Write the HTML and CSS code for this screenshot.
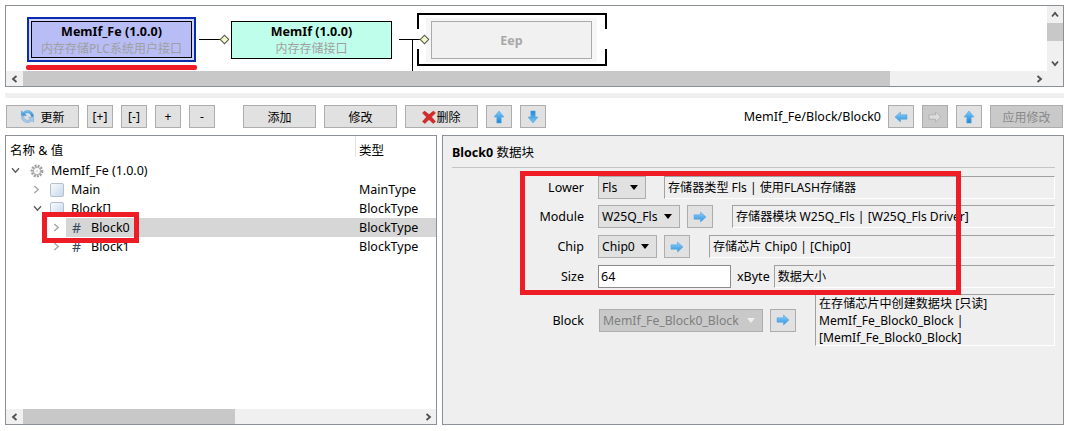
FILE: index.html
```html
<!DOCTYPE html>
<html lang="zh">
<head>
<meta charset="utf-8">
<title>MemIf_Fe</title>
<link rel="stylesheet" href="styles.css">
</head>
<body>
<svg class="defs" width="0" height="0" aria-hidden="true">
  <defs>
    <linearGradient id="blueUp" x1="0" y1="0" x2="0" y2="1"><stop offset="0" stop-color="#7cc8f5"/><stop offset="1" stop-color="#1c86d8"/></linearGradient>
    <linearGradient id="blueDown" x1="0" y1="0" x2="0" y2="1"><stop offset="0" stop-color="#1c86d8"/><stop offset="1" stop-color="#7cc8f5"/></linearGradient>
    <linearGradient id="blueSide" x1="0" y1="0" x2="0" y2="1"><stop offset="0" stop-color="#8ed0f8"/><stop offset="1" stop-color="#2f93e0"/></linearGradient>
    <linearGradient id="sheet" x1="0" y1="0" x2="1" y2="1"><stop offset="0" stop-color="#fafcff"/><stop offset="1" stop-color="#c6d6ea"/></linearGradient>
    <symbol id="up" viewBox="0 0 14 14"><path d="M7 1 L12 7 H9.2 V13 H4.8 V7 H2 Z" fill="url(#blueUp)" stroke="#5aa7df" stroke-width=".6"/></symbol>
    <symbol id="down" viewBox="0 0 14 14"><path d="M7 13 L12 7 H9.2 V1 H4.8 V7 H2 Z" fill="url(#blueDown)" stroke="#5aa7df" stroke-width=".6"/></symbol>
    <symbol id="right" viewBox="0 0 14 14"><path d="M13 7 L7.5 2 V4.8 H1 V9.2 H7.5 V12 Z" fill="url(#blueSide)" stroke="#5aa7df" stroke-width=".6"/></symbol>
    <symbol id="left" viewBox="0 0 14 14"><path d="M1 7 L6.5 2 V4.8 H13 V9.2 H6.5 V12 Z" fill="url(#blueSide)" stroke="#5aa7df" stroke-width=".6"/></symbol>
    <symbol id="chev-r" viewBox="0 0 8 10"><path d="M1.5 1 L6 5 L1.5 9" fill="none" stroke="#a6a6a6" stroke-width="1.6"/></symbol>
    <symbol id="chev-d" viewBox="0 0 10 8"><path d="M1 1.5 L5 6 L9 1.5" fill="none" stroke="#5c5c5c" stroke-width="1.6"/></symbol>
    <symbol id="sb-l" viewBox="0 0 8 8"><path d="M5.5 1 L2 4 L5.5 7" fill="none" stroke="#505050" stroke-width="1.8"/></symbol>
    <symbol id="sb-r" viewBox="0 0 8 8"><path d="M2.5 1 L6 4 L2.5 7" fill="none" stroke="#505050" stroke-width="1.8"/></symbol>
    <symbol id="sb-u" viewBox="0 0 8 8"><path d="M1 5.5 L4 2 L7 5.5" fill="none" stroke="#505050" stroke-width="1.8"/></symbol>
    <symbol id="sb-d" viewBox="0 0 8 8"><path d="M1 2.5 L4 6 L7 2.5" fill="none" stroke="#505050" stroke-width="1.8"/></symbol>
    <symbol id="box" viewBox="0 0 14 14"><rect x=".5" y=".5" width="13" height="13" rx="1.5" fill="url(#sheet)" stroke="#b5c0cc"/></symbol>
    <symbol id="gear" viewBox="0 0 14 14"><circle cx="7" cy="7" r="5" fill="none" stroke="#a0a0a0" stroke-width="2.8" stroke-dasharray="1.9 1.05"/><circle cx="7" cy="7" r="3.6" fill="none" stroke="#b4b4b4" stroke-width="1.4"/><circle cx="7" cy="7" r="1.5" fill="#e3e3e3"/></symbol>
  </defs>
</svg>

<div class="app">
  <section class="diagram">
    <div class="canvas">
      <div class="node node-fe"><div class="node-inner"><b>MemIf_Fe (1.0.0)</b><span>内存存储PLC系统用户接口</span></div></div>
      <div class="mark-underline"></div>
      <div class="link link-a"></div>
      <div class="diamond diamond-a"></div>
      <div class="node node-memif"><b>MemIf (1.0.0)</b><span>内存存储接口</span></div>
      <div class="link link-b"></div>
      <div class="link-drop"></div>
      <div class="frame"><div class="frame-side frame-l"></div><div class="frame-side frame-r"></div></div>
      <div class="node-halo"></div>
      <div class="node node-eep"><b>Eep</b></div>
      <div class="diamond diamond-b"></div>
    </div>
    <div class="vscroll">
      <div class="sb-btn"><svg class="sb-ico"><use href="#sb-u"/></svg></div>
      <div class="vthumb"></div>
      <div class="sb-fill"></div>
      <div class="sb-btn"><svg class="sb-ico"><use href="#sb-d"/></svg></div>
    </div>
    <div class="hscroll">
      <div class="sb-btn"><svg class="sb-ico"><use href="#sb-l"/></svg></div>
      <div class="hthumb hthumb-top"></div>
      <div class="sb-fill"></div>
      <div class="sb-btn"><svg class="sb-ico"><use href="#sb-r"/></svg></div>
    </div>
    <div class="corner"></div>
  </section>

  <div class="divider"></div>

  <div class="toolbar">
    <button class="btn wide"><svg class="ico16" viewBox="0 0 16 16"><path d="M8 1.5 A6.5 6.5 0 0 1 14.5 8 H12 A4 4 0 0 0 5 5.4 L7 7 H1.5 V1.8 L3.3 3.6 A6.5 6.5 0 0 1 8 1.5 Z" fill="url(#blueUp)" stroke="#4d8fc9" stroke-width=".5"/><path d="M8 14.5 A6.5 6.5 0 0 1 1.5 8 H4 A4 4 0 0 0 11 10.6 L9 9 H14.5 V14.2 L12.7 12.4 A6.5 6.5 0 0 1 8 14.5 Z" fill="#a7c8e8" stroke="#6b9fcf" stroke-width=".5"/></svg>更新</button>
    <button class="btn small gap8">[+]</button>
    <button class="btn small gap8">[-]</button>
    <button class="btn small gap8">+</button>
    <button class="btn small gap8">-</button>
    <button class="btn wide gap28">添加</button>
    <button class="btn wide gap8">修改</button>
    <button class="btn wide gap8"><svg class="ico14" viewBox="0 0 14 14"><path d="M2.5 1 L7 4.6 L11.5 1 L13.5 3 L9.5 7 L13.5 11.5 L11.2 13.5 L7 9.6 L2.8 13.5 L.5 11.5 L4.5 7 L.5 3 Z" fill="#d42a2a" stroke="#b81c1c" stroke-width=".5"/></svg>删除</button>
    <button class="btn small gap8"><svg class="ico14"><use href="#up"/></svg></button>
    <button class="btn small gap8"><svg class="ico14"><use href="#down"/></svg></button>
    <span class="path">MemIf_Fe/Block/Block0</span>
    <button class="btn small gap7"><svg class="ico14"><use href="#left"/></svg></button>
    <button class="btn small gap8 off"><svg class="ico14 dim" viewBox="0 0 14 14"><path d="M13 7 L7.5 2 V4.8 H1 V9.2 H7.5 V12 Z" fill="#dcdcdc" stroke="#a8a8a8" stroke-width=".7"/></svg></button>
    <button class="btn small gap8"><svg class="ico14"><use href="#up"/></svg></button>
    <button class="btn wide gap8 off apply">应用修改</button>
  </div>

  <div class="workspace">
    <section class="tree">
      <div class="tree-head"><span class="head-name">名称 &amp; 值</span><span class="head-type">类型</span></div>
      <div class="row lvl0">
        <span class="twist"><svg class="chev-d"><use href="#chev-d"/></svg></span>
        <div class="row-body"><svg class="ico14"><use href="#gear"/></svg><span class="name">MemIf_Fe (1.0.0)</span><span class="type"></span></div>
      </div>
      <div class="row lvl1">
        <span class="twist"><svg class="chev-r"><use href="#chev-r"/></svg></span>
        <div class="row-body"><svg class="ico14"><use href="#box"/></svg><span class="name">Main</span><span class="type">MainType</span></div>
      </div>
      <div class="row lvl1">
        <span class="twist"><svg class="chev-d"><use href="#chev-d"/></svg></span>
        <div class="row-body"><svg class="ico14"><use href="#box"/></svg><span class="name">Block[]</span><span class="type">BlockType</span></div>
      </div>
      <div class="row lvl2">
        <span class="twist"><svg class="chev-r"><use href="#chev-r"/></svg></span>
        <div class="row-body selected"><span class="hash">#</span><span class="name">Block0</span><span class="type">BlockType</span></div>
      </div>
      <div class="row lvl2">
        <span class="twist"><svg class="chev-r"><use href="#chev-r"/></svg></span>
        <div class="row-body"><span class="hash">#</span><span class="name">Block1</span><span class="type">BlockType</span></div>
      </div>
      <div class="tree-space"></div>
      <div class="hscroll">
        <div class="sb-btn"><svg class="sb-ico"><use href="#sb-l"/></svg></div>
        <div class="hthumb hthumb-tree"></div>
        <div class="sb-fill"></div>
        <div class="sb-btn"><svg class="sb-ico"><use href="#sb-r"/></svg></div>
      </div>
      <div class="mark-tree"></div>
    </section>

    <section class="form">
      <h2 class="form-title"><b>Block0</b> 数据块</h2>
      <div class="field tall-29">
        <label class="lbl">Lower</label>
        <div class="combo c-lower">Fls<i class="caret"></i></div>
        <div class="desc d-lower">存储器类型 Fls | 使用FLASH存储器</div>
      </div>
      <div class="field">
        <label class="lbl">Module</label>
        <div class="combo c-module">W25Q_Fls<i class="caret"></i></div>
        <button class="btn small go"><svg class="ico14"><use href="#right"/></svg></button>
        <div class="desc d-link">存储器模块 W25Q_Fls | [W25Q_Fls Driver]</div>
      </div>
      <div class="field">
        <label class="lbl">Chip</label>
        <div class="combo c-chip">Chip0<i class="caret"></i></div>
        <button class="btn small go"><svg class="ico14"><use href="#right"/></svg></button>
        <div class="desc d-link">存储芯片 Chip0 | [Chip0]</div>
      </div>
      <div class="field tall-29">
        <label class="lbl">Size</label>
        <input class="text-input" value="64">
        <span class="unit">xByte</span>
        <div class="desc d-size">数据大小</div>
      </div>
      <div class="field block-field">
        <label class="lbl">Block</label>
        <div class="combo c-block disabled">MemIf_Fe_Block0_Block<i class="caret"></i></div>
        <button class="btn small go"><svg class="ico14"><use href="#right"/></svg></button>
        <div class="desc d-block">在存储芯片中创建数据块 [只读]<br>MemIf_Fe_Block0_Block |<br>[MemIf_Fe_Block0_Block]</div>
      </div>
      <div class="mark-form"></div>
    </section>
  </div>
</div>
</body>
</html>
```
FILE: styles.css
```css
* { box-sizing: border-box; }
html, body { margin: 0; padding: 0; background: #fff; }
body {
  width: 1069px; height: 431px; overflow: hidden; color: #000;
  font: 12.5px "Noto Sans", "Noto Sans CJK SC", sans-serif;
}
.defs { position: absolute; }
.app { padding: 5px 5px 0 5px; }

/* diagram */
.diagram {
  display: grid; grid-template-columns: 1fr 16px; grid-template-rows: 1fr 15px;
  height: 82px; border: 1px solid #8b8f96; background: #fff;
}
.canvas { position: relative; overflow: hidden; }
.node { position: absolute; display: flex; flex-direction: column; align-items: center; justify-content: center; line-height: 17px; }
.node b { font-size: 12.5px; color: #000; }
.node span { color: #a0a0a0; font-size: 12px; }
.node-fe { left: 21px; top: 11px; width: 169px; height: 45px; border: 2px solid #0a2db0; background: #d0d4f8; padding: 2px; }
.node-inner { width: 100%; height: 100%; border: 1px solid #000; background: #b8bdf5; display: flex; flex-direction: column; align-items: center; justify-content: center; }
.mark-underline { position: absolute; left: 20px; top: 59px; width: 171px; height: 5px; background: #ee1c25; border-radius: 2px; }
.node-memif { left: 225px; top: 15px; width: 161px; height: 38px; border: 1px solid #000; background: #bffeea; }
.node-eep { left: 425px; top: 15px; width: 161px; height: 38px; border: 1px solid #aaa; background: #f1f1f1; }
.node-eep b { color: #a8a8a8; }
.node-halo { position: absolute; left: 420px; top: 12px; width: 171px; height: 44px; background: #f6f6f6; }
.link { position: absolute; height: 1px; background: #000; top: 33px; }
.link-a { left: 193px; width: 22px; }
.link-b { left: 393px; width: 22px; }
.link-drop { position: absolute; left: 406px; top: 33px; width: 1px; height: 32px; background: #000; }
.diamond { position: absolute; top: 30px; width: 7px; height: 7px; background: #f1f9c8; border: 1px solid #555; transform: rotate(45deg); z-index: 2; }
.diamond-a { left: 215px; }
.diamond-b { left: 415px; }
.frame { position: absolute; left: 411px; top: 7px; width: 190px; height: 53px; border-top: 2px solid #000; border-bottom: 2px solid #000; }
.frame-side { position: absolute; top: -2px; bottom: -2px; width: 2px; background: linear-gradient(#000 0, #000 16px, transparent 16px, transparent 36px, #000 36px); }
.frame-l { left: 0; }
.frame-r { right: 0; }
.vscroll { display: flex; flex-direction: column; background: #f0f0f0; }
.vscroll .sb-btn { height: 17px; width: auto; flex: none; }
.vthumb { height: 18px; background: #c8c8c8; flex: none; }
.hscroll { display: flex; height: 15px; background: #f0f0f0; flex: none; }
.sb-btn { width: 17px; display: flex; align-items: center; justify-content: center; flex: none; }
.sb-fill { flex: 1; }
.sb-ico { width: 8px; height: 8px; }
.hthumb { background: #c8c8c8; flex: none; }
.hthumb-top { width: 867px; }
.hthumb-tree { width: 212px; }
.corner { background: #f0f0f0; }

.divider { height: 5px; margin-top: 6px; background: #f0f0f0; }

/* toolbar */
.toolbar { display: flex; align-items: center; height: 23px; margin: 7px 1px 0 1px; }
.btn {
  height: 23px; padding: 0; border: 1px solid #adadad; background: #e1e1e1; color: #000;
  font: 12px "Noto Sans", "Noto Sans CJK SC", sans-serif; display: inline-flex; align-items: center; justify-content: center; flex: none;
}
.wide { width: 73px; }
.small { width: 26px; }
.gap7 { margin-left: 7px; }
.gap8 { margin-left: 8px; }
.gap28 { margin-left: 28px; }
.off { background: #c9c9c9; color: #8a8a8a; }
.apply { width: 73px; }
.path { margin-left: auto; color: #000; font-size: 12.5px; }
.ico16 { width: 15px; height: 15px; margin-right: 5px; }
.ico14 { width: 14px; height: 14px; flex: none; }
.btn .ico14:not(:only-child) { margin-right: 6px; margin-left: 1px; }

/* workspace */
.workspace { display: flex; gap: 5px; margin-top: 7px; height: 290px; }
.tree { position: relative; width: 432px; border: 1px solid #8b8f96; display: flex; flex-direction: column; background: #fff; }
.tree-head { display: flex; height: 25px; padding: 4px 0 0 4px; flex: none; }
.head-name { width: 345px; }
.head-type { flex: 1; border-left: 1px solid #e4e4e4; padding-left: 3px; height: 21px; margin-top: -4px; padding-top: 4px; }
.row { display: flex; height: 19px; line-height: 19px; flex: none; }
.twist { width: 21px; height: 19px; display: flex; align-items: center; padding-left: 5px; flex: none; }
.lvl1 { padding-left: 20px; }
.lvl1 .twist { padding-left: 7px; }
.lvl2 { padding-left: 39px; }
.lvl2 .twist { padding-left: 8px; }
.chev-r { width: 7px; height: 9px; }
.chev-d { width: 9px; height: 7px; }
.row-body { flex: 1; display: flex; align-items: center; padding-left: 3px; min-width: 0; }
.selected { background: #d6d6d6; }
.name { flex: 1; padding-left: 7px; white-space: nowrap; }
.lvl2 .name { padding-left: 6px; }
.hash { width: 16px; padding-left: 3px; color: #33475b; font-size: 14px; }
.type { width: 77px; flex: none; }
.tree-space { flex: 1; }
.mark-tree { position: absolute; left: 36px; top: 76px; width: 97px; height: 31px; border: 5px solid #ee1c25; }

/* form */
.form { position: relative; flex: 1; border: 1px solid #8b8f96; background: #efefef; padding: 0 8px 0 0; }
.form-title { margin: 0 0 8px 9px; height: 32px; line-height: 33px; border-bottom: 1px solid #c4c4c4; font-size: 12.5px; font-weight: normal; color: #000; }
.form-title b { font-weight: 700; }
.field { display: flex; align-items: flex-start; height: 30px; }
.tall-29 { height: 29px; }
.lbl { width: 141px; flex: none; margin-right: 14px; text-align: right; line-height: 23px; }
.combo {
  position: relative; height: 23px; line-height: 21px; padding-left: 3px; flex: none; font-size: 12.2px;
  border: 1px solid #adadad; background: #e1e1e1; white-space: nowrap;
}
.caret { position: absolute; right: 7px; top: 8px; border: 4px solid transparent; border-top: 5px solid #000; border-bottom: 0; }
.c-lower { width: 48px; }
.c-module { width: 82px; }
.c-chip { width: 59px; }
.c-block { width: 164px; margin-left: 1px; }
.disabled { background: #c9c9c9; color: #7f7f7f; }
.disabled .caret { border-top-color: #efefef; }
.go { margin-left: 7px; }
.desc {
  flex: 1; height: 23px; line-height: 22px; padding-left: 3px; font-size: 12.1px;
  border: 1px solid #fff; border-top-color: #a0a0a0; border-left-color: #a0a0a0; white-space: nowrap;
}
.d-lower { margin-left: 18px; }
.d-link { margin-left: 19px; }
.d-size { margin-left: 4px; }
.text-input { width: 133px; height: 23px; padding: 0 2px; border: 1px solid #8b8b8b; background: #fff; font: inherit; color: #000; flex: none; outline: none; }
.unit { margin-left: 6px; line-height: 24px; flex: none; }
.block-field { align-items: center; height: 52px; }
.block-field .desc { height: 52px; line-height: 17px; padding: 0 0 0 3px; margin-left: 19px; }
.mark-form { position: absolute; left: 77px; top: 35px; width: 441px; height: 124px; border: 5px solid #ee1c25; pointer-events: none; }
```
